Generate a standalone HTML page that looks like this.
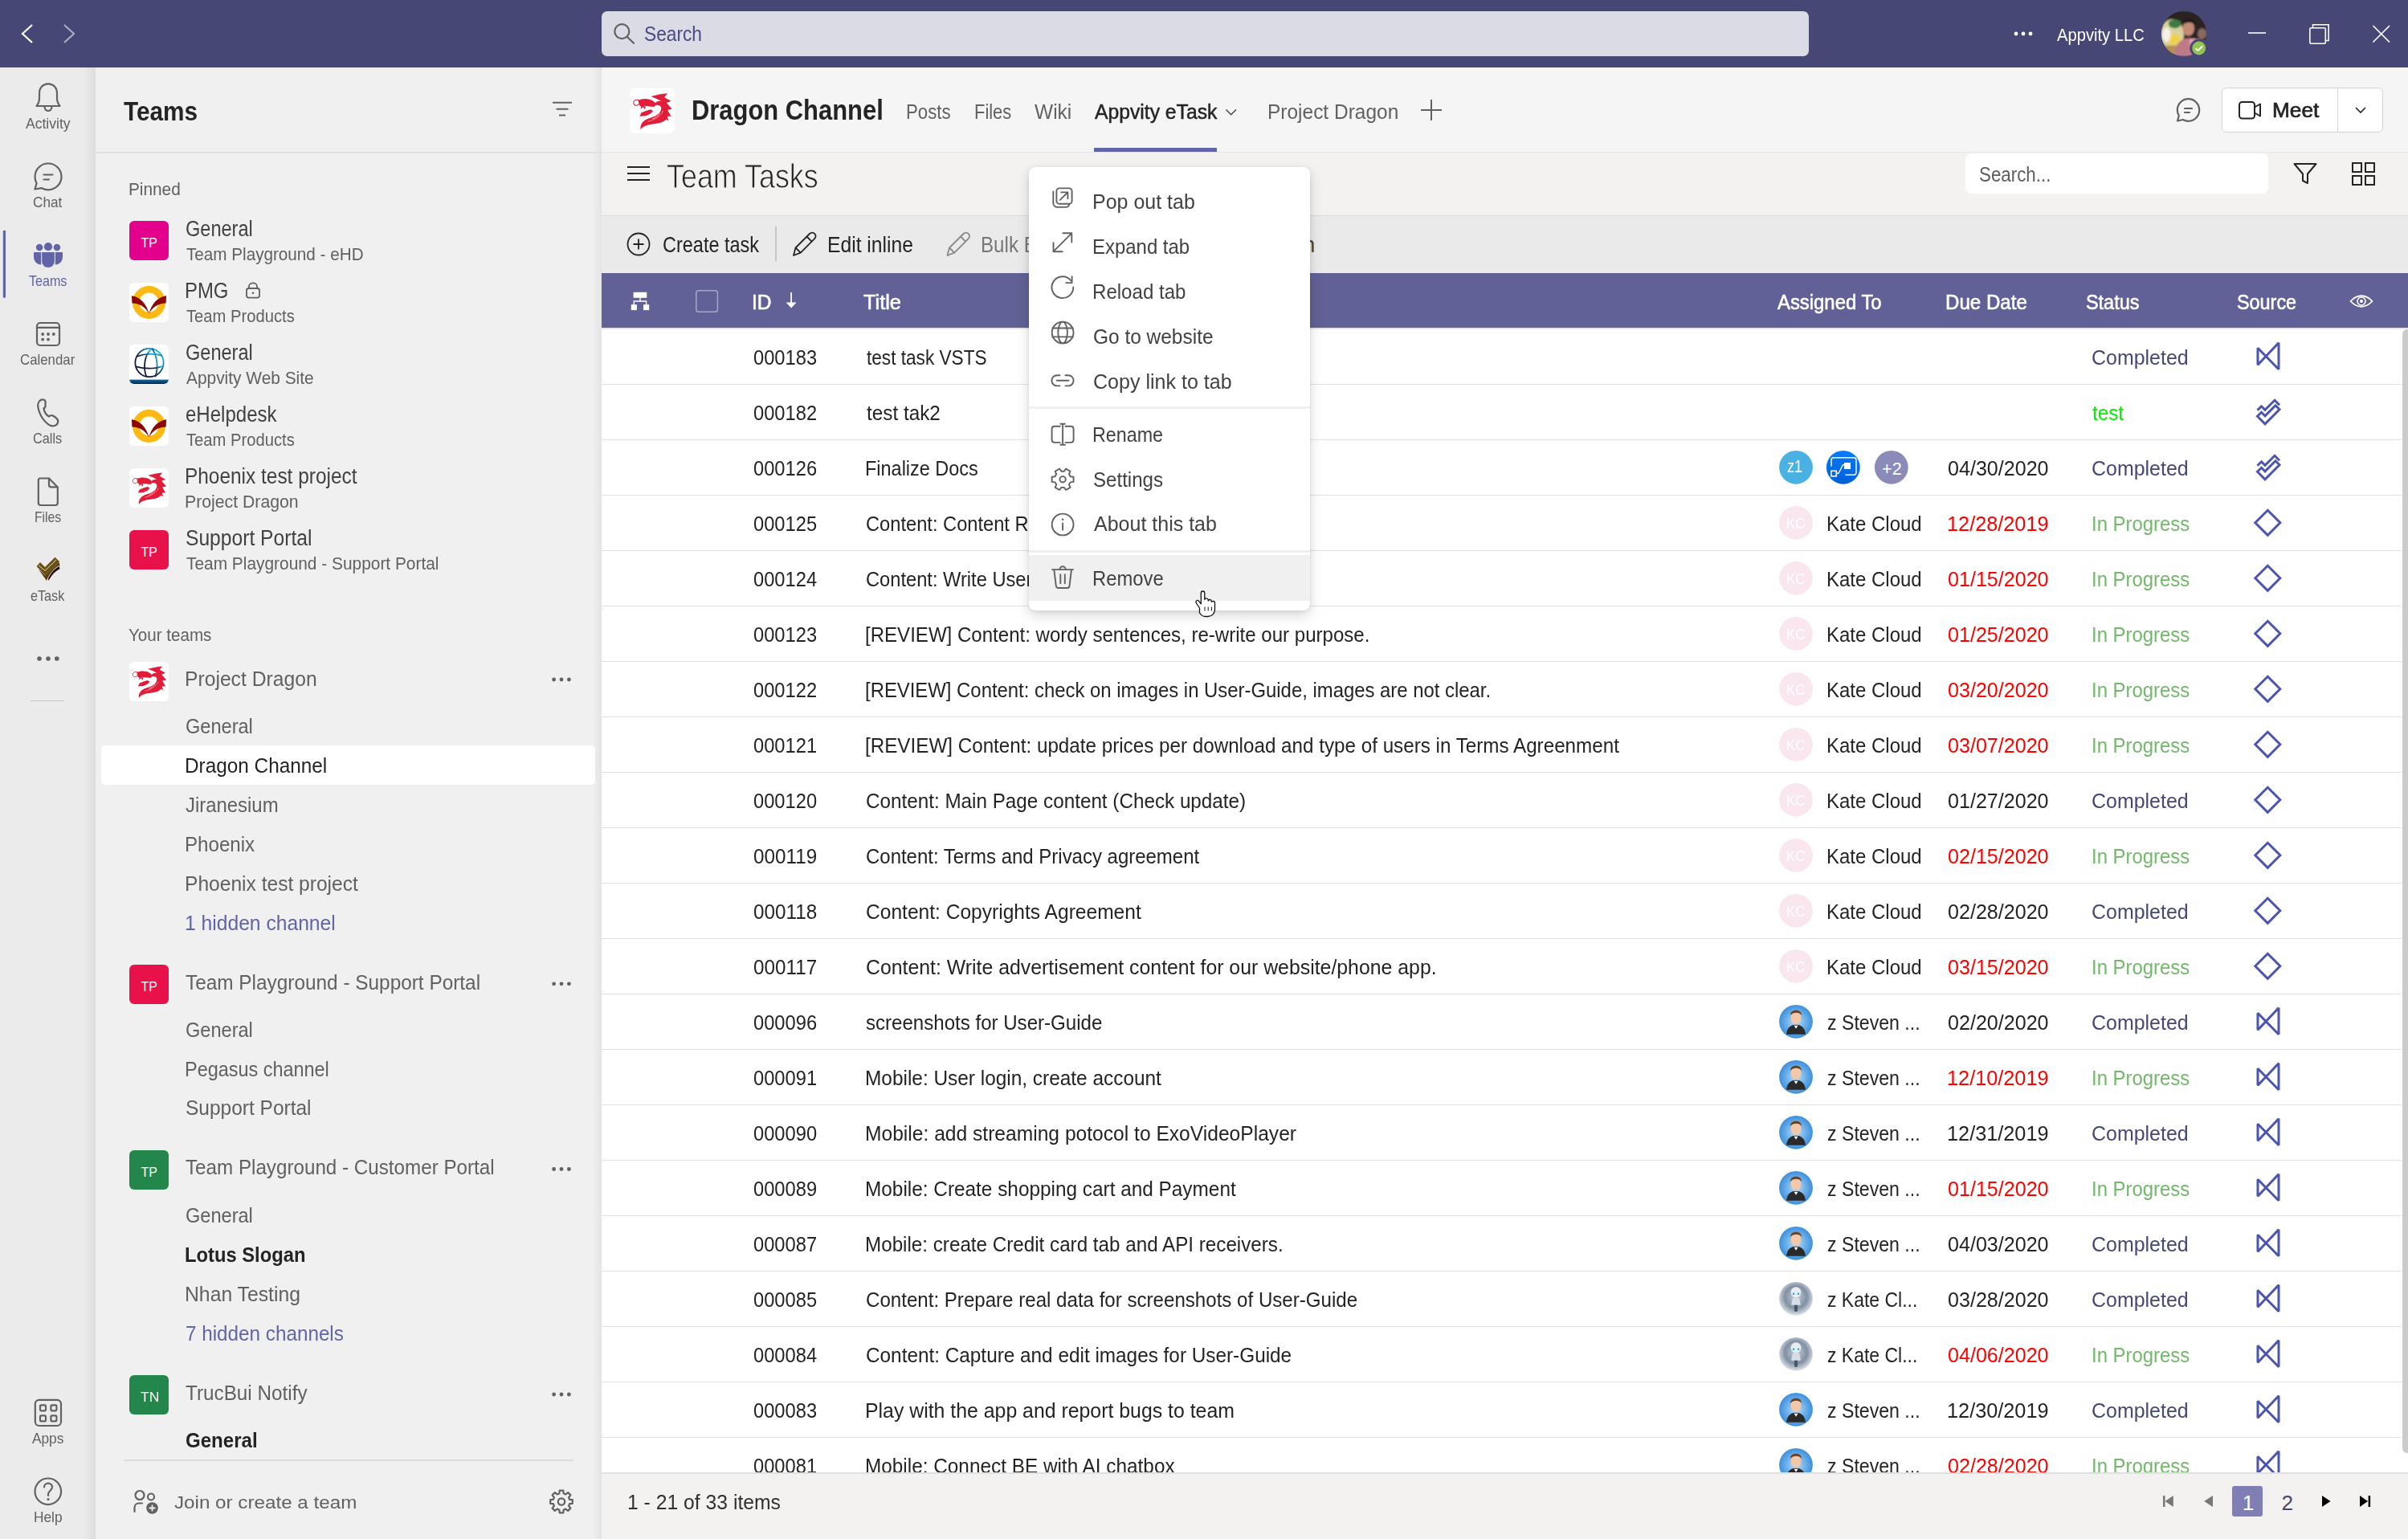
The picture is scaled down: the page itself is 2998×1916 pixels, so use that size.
<!DOCTYPE html><html><head><meta charset="utf-8"><title>Teams - Dragon Channel</title><style>
*{margin:0;padding:0;box-sizing:border-box}
html,body{width:2998px;height:1916px;overflow:hidden;background:#fff;font-family:"Liberation Sans",sans-serif}
.b{position:absolute}
.t{position:absolute;white-space:nowrap;transform-origin:0 0;font-family:"Liberation Sans",sans-serif}
svg{position:absolute;left:0;top:0;overflow:visible}

</style></head><body>
<div class="b" style="left:0px;top:0px;width:2998px;height:84px;background:#464775;"></div>
<div class="b" style="left:0px;top:84px;width:119px;height:1832px;background:#ebebeb;"></div>
<div class="b" style="left:103px;top:84px;width:16px;height:1832px;background:linear-gradient(90deg,rgba(0,0,0,0),rgba(0,0,0,0.06));"></div>
<div class="b" style="left:119px;top:84px;width:630px;height:1832px;background:#f0f0f0;"></div>
<div class="b" style="left:737px;top:84px;width:12px;height:1832px;background:linear-gradient(90deg,rgba(0,0,0,0),rgba(0,0,0,0.05));"></div>
<div class="b" style="left:749px;top:84px;width:2249px;height:105px;background:#f5f5f5;"></div>
<div class="b" style="left:749px;top:188.6px;width:2249px;height:1.6px;background:#e6e6e6;"></div>
<div class="b" style="left:749px;top:190px;width:2249px;height:1726px;background:#f3f2f1;"></div>
<div class="b" style="left:749px;top:268px;width:2249px;height:1.5px;background:#dedcda;"></div>
<div class="b" style="left:749px;top:269px;width:2249px;height:71px;background:#eaeaea;"></div>
<div class="b" style="left:749px;top:340px;width:2249px;height:67.5px;background:#616197;"></div>
<div class="b" style="left:749px;top:407.5px;width:2249px;height:1425.5px;background:#ffffff;"></div>
<div class="b" style="left:749px;top:14px;width:1503px;height:56px;background:#dbdbe5;border-radius:7px;"></div>
<div class="b" style="left:38px;top:871.6px;width:42px;height:1.5px;background:#c8c8c8;"></div>
<div class="b" style="left:119px;top:188.5px;width:630px;height:2px;background:#e0e0e0;"></div>
<div class="b" style="left:161px;top:275px;width:49px;height:49px;background:#e3008c;border-radius:6px;"></div>
<div class="b" style="left:161px;top:583px;width:49px;height:49px;background:#fff;border-radius:6px;"></div>
<div class="b" style="left:161px;top:660px;width:49px;height:49px;background:#e8114a;border-radius:6px;"></div>
<div class="b" style="left:161px;top:824px;width:49px;height:49px;background:#fff;border-radius:6px;"></div>
<div class="b" style="left:126px;top:928px;width:615px;height:49px;background:#ffffff;border-radius:5px;"></div>
<div class="b" style="left:161px;top:1201px;width:49px;height:49px;background:#e8114a;border-radius:6px;"></div>
<div class="b" style="left:161px;top:1432px;width:49px;height:49px;background:#23874b;border-radius:6px;"></div>
<div class="b" style="left:161px;top:1712px;width:49px;height:49px;background:#23874b;border-radius:6px;"></div>
<div class="b" style="left:154px;top:1816.5px;width:560px;height:2px;background:#dcdcdc;"></div>
<div class="b" style="left:784px;top:110px;width:56px;height:56px;background:#fff;border-radius:6px;"></div>
<div class="b" style="left:1362px;top:183.8px;width:153px;height:5.2px;background:#6264a7;"></div>
<div class="b" style="left:2766px;top:109px;width:200.5px;height:55.5px;background:#ffffff;border:1.5px solid #d4d4d4;border-radius:6px;box-sizing:border-box;"></div>
<div class="b" style="left:2909.5px;top:110px;width:1.5px;height:54px;background:#d4d4d4;"></div>
<div class="b" style="left:2447px;top:191px;width:376.5px;height:50px;background:#ffffff;border-radius:8px;"></div>
<div class="b" style="left:965px;top:282px;width:1.5px;height:42.5px;background:#c8c6c4;"></div>
<div class="b" style="left:749px;top:407.5px;width:2249px;height:2px;background:#e6e6e6;"></div>
<div class="b" style="left:749px;top:477.55px;width:2241px;height:1.5px;background:#e1e1e1;"></div>
<div class="b" style="left:749px;top:546.55px;width:2241px;height:1.5px;background:#e1e1e1;"></div>
<div class="b" style="left:749px;top:615.55px;width:2241px;height:1.5px;background:#e1e1e1;"></div>
<div class="b" style="left:749px;top:684.55px;width:2241px;height:1.5px;background:#e1e1e1;"></div>
<div class="b" style="left:749px;top:753.55px;width:2241px;height:1.5px;background:#e1e1e1;"></div>
<div class="b" style="left:749px;top:822.55px;width:2241px;height:1.5px;background:#e1e1e1;"></div>
<div class="b" style="left:749px;top:891.55px;width:2241px;height:1.5px;background:#e1e1e1;"></div>
<div class="b" style="left:749px;top:960.55px;width:2241px;height:1.5px;background:#e1e1e1;"></div>
<div class="b" style="left:749px;top:1029.55px;width:2241px;height:1.5px;background:#e1e1e1;"></div>
<div class="b" style="left:749px;top:1098.55px;width:2241px;height:1.5px;background:#e1e1e1;"></div>
<div class="b" style="left:749px;top:1167.55px;width:2241px;height:1.5px;background:#e1e1e1;"></div>
<div class="b" style="left:749px;top:1236.55px;width:2241px;height:1.5px;background:#e1e1e1;"></div>
<div class="b" style="left:749px;top:1305.55px;width:2241px;height:1.5px;background:#e1e1e1;"></div>
<div class="b" style="left:749px;top:1374.55px;width:2241px;height:1.5px;background:#e1e1e1;"></div>
<div class="b" style="left:749px;top:1443.55px;width:2241px;height:1.5px;background:#e1e1e1;"></div>
<div class="b" style="left:749px;top:1512.55px;width:2241px;height:1.5px;background:#e1e1e1;"></div>
<div class="b" style="left:749px;top:1581.55px;width:2241px;height:1.5px;background:#e1e1e1;"></div>
<div class="b" style="left:749px;top:1650.55px;width:2241px;height:1.5px;background:#e1e1e1;"></div>
<div class="b" style="left:749px;top:1719.55px;width:2241px;height:1.5px;background:#e1e1e1;"></div>
<div class="b" style="left:749px;top:1788.55px;width:2241px;height:1.5px;background:#e1e1e1;"></div>
<div class="b" style="left:2991.2px;top:410px;width:12px;height:1399px;background:#cbcbcb;border-radius:6px;"></div>
<svg width="2998" height="1916" viewBox="0 0 2998 1916"><path d="M40 31 L28 42 L40 53" stroke="#fff" stroke-width="2.2" fill="none"/>
<path d="M80 31 L92 42 L80 53" stroke="#fff" stroke-opacity="0.55" stroke-width="2.2" fill="none"/>
<circle cx="774.3" cy="39.2" r="9" stroke="#616161" stroke-width="2.2" fill="none"/><path d="M781 46 L789 53.7" stroke="#616161" stroke-width="2.2" stroke-linecap="round"/>
<circle cx="2510" cy="42" r="2.4" fill="#fff"/>
<circle cx="2519" cy="42" r="2.4" fill="#fff"/>
<circle cx="2528" cy="42" r="2.4" fill="#fff"/>
<defs><radialGradient id="av" cx="0.6" cy="0.35" r="0.7"><stop offset="0" stop-color="#e8c0a8"/><stop offset="0.35" stop-color="#b07060"/><stop offset="0.7" stop-color="#c07080"/><stop offset="1" stop-color="#6a5a30"/></radialGradient>
<clipPath id="avc"><circle cx="2719" cy="42" r="28.2"/></clipPath></defs>
<filter id="pblur" x="-10%" y="-10%" width="120%" height="120%"><feGaussianBlur stdDeviation="1.6"/></filter><g clip-path="url(#avc)"><g transform="translate(2690.8 13.8) scale(0.564)" filter="url(#pblur)">
<rect width="100" height="100" fill="#2a2420"/>
<ellipse cx="24" cy="52" rx="26" ry="34" fill="#d8d0a0"/>
<ellipse cx="30" cy="28" rx="14" ry="10" fill="#3a7a40"/>
<ellipse cx="28" cy="62" rx="14" ry="12" fill="#f0d048"/>
<ellipse cx="12" cy="52" rx="9" ry="16" fill="#f4f2ea"/>
<rect x="0" y="76" width="40" height="24" fill="#b89050"/>
<ellipse cx="90" cy="50" rx="10" ry="12" fill="#8a6a60"/>
<ellipse cx="60" cy="38" rx="13" ry="17" fill="#c48a78"/>
<path d="M46 32 C46 14 76 12 76 32 C72 24 52 22 46 32 Z" fill="#1a1410"/>
<path d="M28 100 C30 72 44 60 60 60 C76 60 96 64 100 72 V100 Z" fill="#bf7a88"/>
<path d="M62 62 C76 60 94 64 100 72 V100 H70 Z" fill="#e0a6b4"/>
</g></g>
<circle cx="2737.7" cy="60" r="11.4" fill="#464775"/><circle cx="2737.7" cy="60" r="8.4" fill="#92c353"/>
<path d="M2733.5 60.2 L2736.5 63 L2742 57.5" stroke="#fff" stroke-width="1.8" fill="none"/>
<path d="M2799 41 H2821" stroke="#fff" stroke-width="1.6"/>
<rect x="2875.8" y="34.8" width="19.5" height="19.5" stroke="#fff" stroke-width="1.6" fill="none" rx="1.5"/><path d="M2879.5 34.8 V30.8 H2899.2 V50.5 H2895.3" stroke="#fff" stroke-width="1.6" fill="none"/>
<path d="M2954.5 32 L2975 52.5 M2975 32 L2954.5 52.5" stroke="#fff" stroke-width="1.7"/>
<path d="M45.5 132 C47.5 129.5 49 127 49 122 V116 C49 109 53.8 104.3 60 104.3 C66.2 104.3 71 109 71 116 V122 C71 127 72.5 129.5 74.5 132 Z" stroke="#616161" stroke-width="2.2" fill="none" stroke-linejoin="round" stroke-linecap="round"/><path d="M55.5 132.5 C55.5 135.8 57.5 138 60 138 C62.5 138 64.5 135.8 64.5 132.5" stroke="#616161" stroke-width="2.2" fill="none" stroke-linejoin="round" stroke-linecap="round"/>
<path d="M43.5 235.5 L45.6 228 C44 225.5 43.5 223 43.5 220 C43.5 210.8 51 203.5 60 203.5 C69 203.5 76.5 210.8 76.5 220 C76.5 229 69 236.3 60 236.3 C57 236.3 54.5 235.5 52 234.2 Z" stroke="#616161" stroke-width="2.2" fill="none" stroke-linejoin="round" stroke-linecap="round"/><path d="M54.5 217.5 H65.5 M54.5 223.5 H61" stroke="#616161" stroke-width="2.2" fill="none" stroke-linejoin="round" stroke-linecap="round"/>
<rect x="3.8" y="287" width="3.2" height="83.6" fill="#6264a7"/>
<g fill="#6264a7"><circle cx="49.1" cy="308" r="4.3"/><circle cx="60" cy="307.2" r="5.1"/><circle cx="70.9" cy="308" r="4.3"/><path d="M42 314 H51.2 V329.5 C46 329.5 42 325 42 320 Z"/><path d="M68.8 314 H78 V320 C78 325 74 329.5 68.8 329.5 Z"/><path d="M52.2 314 H67.8 V325 C67.8 329.5 64.3 333 60 333 C55.7 333 52.2 329.5 52.2 325 Z"/></g>
<rect x="46" y="402" width="28" height="28" rx="4" stroke="#616161" stroke-width="2.2" fill="none" stroke-linejoin="round" stroke-linecap="round"/><path d="M46 407.8 H74" stroke="#616161" stroke-width="2.2" fill="none" stroke-linejoin="round" stroke-linecap="round"/>
<g fill="#616161"><circle cx="53.2" cy="416" r="1.9"/><circle cx="60" cy="416" r="1.9"/><circle cx="66.8" cy="416" r="1.9"/><circle cx="53.2" cy="422.6" r="1.9"/><circle cx="60" cy="422.6" r="1.9"/></g>
<path d="M54 497.5 C50 497 47 500.5 47.2 505 C47.6 513 53 524 62 529.5 C66 531.5 71 530 72 526 C72.7 523.5 71.5 521.5 69.5 520 L66 517.5 C64 516.5 62 517.5 61 518.5 C57.5 516.5 55 512.5 54.5 508.5 C56 507.5 57 505.5 56.5 503.5 L56.5 500 C56.3 498.5 55.3 497.6 54 497.5 Z" stroke="#616161" stroke-width="2.2" fill="none" stroke-linejoin="round" stroke-linecap="round"/>
<path d="M50 595.5 H61 L71.8 606.5 V626 C71.8 627.7 70.5 629 68.8 629 H50.8 C49.1 629 47.8 627.7 47.8 626 V598 C47.8 596.5 48.6 595.5 50 595.5 Z" stroke="#616161" stroke-width="2.2" fill="none" stroke-linejoin="round" stroke-linecap="round"/><path d="M61 595.8 V603.5 C61 605 62 606.3 63.5 606.3 H71.5" stroke="#616161" stroke-width="2.2" fill="none" stroke-linejoin="round" stroke-linecap="round"/>
<path d="M45.5 705 L50 700 L56 706 L68.5 693.8 L74 699 L56.5 716.5 Z" fill="#6b5010"/><path d="M47.5 708 L56.3 716.5 L73.5 699.5 L74.5 704 C70 705 62 712 58 723 Z" fill="#5a4008"/><path d="M48 703.8 L56 710.5 L70 697" stroke="#fff" stroke-width="1" fill="none" opacity="0.8"/><path d="M60 720 C64 712 69 707 74 705 L74.3 708.5 C69 711 64 716 60.5 723 Z" fill="#2a0a10"/>
<g fill="#616161"><circle cx="49" cy="820" r="2.8"/><circle cx="60" cy="820" r="2.8"/><circle cx="70.8" cy="820" r="2.8"/></g>
<rect x="43.8" y="1742.8" width="32.2" height="32.2" rx="5" stroke="#616161" stroke-width="2.2" fill="none" stroke-linejoin="round" stroke-linecap="round"/>
<rect x="50" y="1749.3" width="7" height="7" rx="1.2" stroke="#616161" stroke-width="2.2" fill="none" stroke-linejoin="round" stroke-linecap="round"/>
<rect x="63.4" y="1749.3" width="7" height="7" rx="1.2" stroke="#616161" stroke-width="2.2" fill="none" stroke-linejoin="round" stroke-linecap="round"/>
<rect x="50" y="1762.4" width="7" height="7" rx="1.2" stroke="#616161" stroke-width="2.2" fill="none" stroke-linejoin="round" stroke-linecap="round"/>
<rect x="63.4" y="1762.4" width="7" height="7" rx="1.2" stroke="#616161" stroke-width="2.2" fill="none" stroke-linejoin="round" stroke-linecap="round"/>
<circle cx="59.8" cy="1856.8" r="16.3" stroke="#616161" stroke-width="2.2" fill="none" stroke-linejoin="round" stroke-linecap="round"/><path d="M55 1851.5 C55 1848.5 57.3 1846.7 60 1846.7 C62.8 1846.7 65 1848.6 65 1851.3 C65 1855.5 60 1856 60 1860.5 V1862" stroke="#616161" stroke-width="2.2" fill="none" stroke-linejoin="round" stroke-linecap="round"/><circle cx="60" cy="1866.5" r="1.6" fill="#616161"/>
<defs>
<symbol id="dragon" viewBox="0 0 100 100">
<g fill="#e11d3a">
<path d="M24.5 92 C22 80 30 70 45 66 C58 62 68 56 70 46 C71 38 64 33 57 37 C60 30 72 30 78 38 C86 48 87 62 80 70 C70 80 50 78 38 82 C30 85 26 88 24.5 92 Z"/>
<path d="M47 18 C60 14 72 12 84 11 L77 20 L92 28 L82 32 L94 46 L84 48 L92 62 L82 62 L87 72 L78 68 C84 56 82 40 72 30 C64 24 56 22 47 18 Z"/>
<path d="M54 36 C58 28 68 26 74 30 C82 38 86 52 84 64 L78 70 C80 56 76 44 66 38 Z"/>
<path d="M19 27 C28 22 42 22 52 28 L60 35 L54 41 L44 40 L34 39 L26 41 L21 37 Z"/>
<path d="M26 39 L24 46 L30 41 L33 47 L36 40 Z"/>
<path d="M22 62 L26 54 L36 50 L46 47 L52 50 L47 56 L36 61 Z"/>
</g>
<path d="M22 27 C12 22 6 30 10 36 C13 40 19 38 20 34" stroke="#e11d3a" stroke-width="1.8" fill="none"/>
<path d="M40 74 C55 70 68 62 74 50 M50 68 C60 64 66 58 67 50" stroke="#fff" stroke-width="1.2" fill="none" opacity="0.8"/>
</symbol>
<symbol id="pmg" viewBox="0 0 100 100">
<rect width="100" height="100" rx="12" fill="#fff"/>
<circle cx="50" cy="50" r="33" stroke="#fdb913" stroke-width="17.5" fill="none"/>
<path d="M6 33 C26 36 44 52 50 79 C42 62 26 52 7 52 Z" fill="#8b0505"/>
<path d="M94 33 C74 36 56 52 50 79 C58 62 74 52 93 52 Z" fill="#8b0505"/>
</symbol>
<symbol id="globe" viewBox="0 0 100 100">
<defs><linearGradient id="gg" x1="0.1" y1="0.9" x2="0.9" y2="0.1"><stop offset="0.35" stop-color="#0f1a3c"/><stop offset="0.95" stop-color="#1ab4ec"/></linearGradient>
<linearGradient id="gb" x1="0" y1="0" x2="0" y2="1"><stop offset="0" stop-color="#0b6aa0"/><stop offset="1" stop-color="#002a5a"/></linearGradient>
<clipPath id="gclip"><rect width="100" height="100" rx="12"/></clipPath></defs>
<rect width="100" height="100" rx="12" fill="#fff"/>
<g stroke="url(#gg)" stroke-width="3.6" fill="none">
<circle cx="51" cy="46" r="36"/>
<path d="M58 10 C38 24 34 60 44 82"/>
<path d="M58 10 C72 30 74 60 66 82"/>
<path d="M20 30 C40 22 66 22 84 28"/>
<path d="M16 56 C40 62 66 62 86 54"/>
</g>
<rect x="0" y="89" width="100" height="11" fill="url(#gb)" clip-path="url(#gclip)"/>
</symbol>
<symbol id="dots3" viewBox="0 0 24 6"><circle cx="2.6" cy="3" r="2.4"/><circle cx="12" cy="3" r="2.4"/><circle cx="21.4" cy="3" r="2.4"/></symbol>
</defs>
<path d="M688 127.8 H712 M692.5 135.7 H707.5 M696 143.6 H704" stroke="#616161" stroke-width="2" />
<use href="#pmg" x="161" y="352" width="49" height="49"/>
<use href="#globe" x="161" y="429" width="49" height="49"/>
<use href="#pmg" x="161" y="506" width="49" height="49"/>
<use href="#dragon" x="161" y="583" width="49" height="49"/>
<rect x="307" y="359" width="16" height="11.6" rx="2.5" stroke="#616161" stroke-width="1.8" fill="none"/><path d="M310 359 V356.5 C310 354 312.5 352.4 315 352.4 C317.5 352.4 320 354 320 356.5 V359" stroke="#616161" stroke-width="1.8" fill="none"/><circle cx="315" cy="364.8" r="1.3" fill="#616161"/>
<use href="#dragon" x="161" y="824" width="49" height="49"/>
<use href="#dots3" x="687" y="843" width="24" height="6" fill="#616161"/>
<use href="#dots3" x="687" y="1221.8" width="24" height="6" fill="#616161"/>
<use href="#dots3" x="687" y="1452.5" width="24" height="6" fill="#616161"/>
<use href="#dots3" x="687" y="1733" width="24" height="6" fill="#616161"/>
<circle cx="174" cy="1861.5" r="5.5" stroke="#616161" stroke-width="2.2" fill="none" stroke-linejoin="round" stroke-linecap="round" stroke-width="2"/><circle cx="188" cy="1863.5" r="4" stroke="#616161" stroke-width="2.2" fill="none" stroke-linejoin="round" stroke-linecap="round" stroke-width="2"/><path d="M167.5 1882 V1877 C167.5 1873.5 170 1871.5 173 1871.5 H177" stroke="#616161" stroke-width="2.2" fill="none" stroke-linejoin="round" stroke-linecap="round" stroke-width="2"/><circle cx="189.5" cy="1877.5" r="7.3" fill="#616161"/><path d="M189.5 1873.5 V1881.5 M185.5 1877.5 H193.5" stroke="#f0f0f0" stroke-width="1.8"/>
<path d="M709.15 1866.81 L712.81 1867.20 L712.81 1871.80 L709.15 1872.19 L708.08 1874.77 L710.39 1877.64 L707.14 1880.89 L704.27 1878.58 L701.69 1879.65 L701.30 1883.31 L696.70 1883.31 L696.31 1879.65 L693.73 1878.58 L690.86 1880.89 L687.61 1877.64 L689.92 1874.77 L688.85 1872.19 L685.19 1871.80 L685.19 1867.20 L688.85 1866.81 L689.92 1864.23 L687.61 1861.36 L690.86 1858.11 L693.73 1860.42 L696.31 1859.35 L696.70 1855.69 L701.30 1855.69 L701.69 1859.35 L704.27 1860.42 L707.14 1858.11 L710.39 1861.36 L708.08 1864.23 Z" stroke="#616161" stroke-width="2.2" fill="none" stroke-linejoin="round" stroke-linecap="round" stroke-width="2"/><circle cx="699" cy="1869.5" r="4.2" stroke="#616161" stroke-width="2.2" fill="none" stroke-linejoin="round" stroke-linecap="round" stroke-width="2"/>
<use href="#dragon" x="784" y="110" width="56" height="56"/>
<path d="M1526.5 136.5 L1532.7 142.7 L1539 136.5" stroke="#424242" stroke-width="1.5" fill="none"/>
<path d="M1782 124 V150 M1769 137 H1795" stroke="#616161" stroke-width="2"/>
<path d="M2711 150.5 L2712.8 144 C2711.5 142 2710.8 139.7 2710.8 137 C2710.8 129.3 2717 123.2 2724.5 123.2 C2732 123.2 2738.2 129.3 2738.2 137 C2738.2 144.6 2732 150.8 2724.5 150.8 C2722 150.8 2719.8 150 2717.7 149 Z" stroke="#616161" stroke-width="2.2" fill="none" stroke-linejoin="round" stroke-linecap="round" stroke-width="2"/><path d="M2720 135 H2729 M2720 140 H2726" stroke="#616161" stroke-width="2.2" fill="none" stroke-linejoin="round" stroke-linecap="round" stroke-width="2"/>
<rect x="2788" y="127" width="19" height="20.5" rx="3.5" stroke="#242424" stroke-width="2" fill="none" stroke-linejoin="round" stroke-linecap="round"/><path d="M2807 133.5 L2814 129.5 V144.5 L2807 140.5" stroke="#242424" stroke-width="2" fill="none" stroke-linejoin="round" stroke-linecap="round"/>
<path d="M2933 134 L2939 140 L2945 134" stroke="#252423" stroke-width="1.6" fill="none"/>
<path d="M781 208 H809 M781 216 H809 M781 224 H809" stroke="#252423" stroke-width="2"/>
<path d="M2856.5 204 H2883.5 L2873 216.5 V228 L2867 225 V216.5 Z" stroke="#252423" stroke-width="2" fill="none" stroke-linejoin="round"/>
<g stroke="#252423" stroke-width="2" fill="none"><rect x="2929" y="203" width="11" height="11"/><rect x="2945" y="203" width="11" height="11"/><rect x="2929" y="219" width="11" height="11"/><rect x="2945" y="219" width="11" height="11"/></g>
<circle cx="795" cy="304" r="13.5" stroke="#252423" stroke-width="1.8" fill="none"/><path d="M795 297.5 V310.5 M788.5 304 H801.5" stroke="#252423" stroke-width="1.8"/>
<path d="M988 318 L990.5 308.5 L1008 291 C1009.8 289.2 1012.6 289.2 1014.2 291 C1016 292.7 1016 295.5 1014.2 297.2 L996.8 314.7 Z M1004.5 294.5 L1010.8 300.8 M990.5 308.5 L996.8 314.7" stroke="#252423" stroke-width="1.8" fill="none" stroke-linejoin="round"/>
<path d="M988 318 L990.5 308.5 L1008 291 C1009.8 289.2 1012.6 289.2 1014.2 291 C1016 292.7 1016 295.5 1014.2 297.2 L996.8 314.7 Z M1004.5 294.5 L1010.8 300.8 M990.5 308.5 L996.8 314.7" transform="translate(191.5 0)" stroke="#8a8886" stroke-width="1.8" fill="none" stroke-linejoin="round"/>
<g fill="#fff"><rect x="788.6" y="363.8" width="16.7" height="7" /><rect x="785.8" y="379.1" width="7.1" height="7"/><rect x="801" y="379.1" width="7.2" height="7"/></g><path d="M797 370.8 V375 M789.3 379.1 V375 H804.6 V379.1" stroke="#fff" stroke-width="1.4" fill="none"/>
<rect x="866.8" y="361.7" width="26.6" height="26.6" rx="3" stroke="rgba(255,255,255,0.45)" stroke-width="1.5" fill="none"/>
<path d="M985.1 364 V378" stroke="#fff" stroke-width="1.8"/><path d="M978.7 376.5 H991.6 L985.1 383.6 Z" fill="#fff"/>
<path d="M2926.5 375 C2935 366 2945 366 2953.5 375 C2945 384 2935 384 2926.5 375 Z" stroke="#fff" stroke-width="1.8" fill="none"/><circle cx="2940" cy="375" r="5" stroke="#fff" stroke-width="1.6" fill="none"/><circle cx="2940" cy="375" r="2" fill="#fff"/>
<defs>
<radialGradient id="stv" cx="0.5" cy="0.5" r="0.5"><stop offset="0" stop-color="#bfe0f8"/><stop offset="0.6" stop-color="#6aaee8"/><stop offset="1" stop-color="#3d8fdc"/></radialGradient>
<radialGradient id="rob" cx="0.5" cy="0.45" r="0.55"><stop offset="0" stop-color="#c8d0d8"/><stop offset="0.6" stop-color="#8090a4"/><stop offset="1" stop-color="#e0e4ea"/></radialGradient>
<linearGradient id="flow" x1="0" y1="0" x2="0" y2="1"><stop offset="0" stop-color="#0a7af8"/><stop offset="1" stop-color="#0060d8"/></linearGradient>
</defs>
<path d="M2811 433.3 L2837 459.8 V426.8 L2811 454.3 Z" stroke="#4b55b0" stroke-width="3" fill="none" stroke-linejoin="miter" stroke-miterlimit="1.6"/>
<path d="M2810.5 510.79999999999995 L2815.5 505.79999999999995 L2820 510.29999999999995 L2832 498.29999999999995 L2838 504.29999999999995" stroke="#4b55b0" stroke-width="3" fill="none"/><path d="M2810.5 518.3 L2820 527.8 L2838 509.79999999999995 L2833 504.79999999999995 L2820 517.8 L2815.5 513.3 Z" stroke="#4b55b0" stroke-width="3" fill="none"/>
<circle cx="2236" cy="581.8" r="20.9" fill="#4ab2e3"/>
<circle cx="2294.8" cy="581.8" r="20.9" fill="url(#flow)"/><path d="M2280 580.8 V572.8 C2280 570.8 2281 569.8 2283 569.8 H2308 C2310 569.8 2311 570.8 2311 572.8 V588.3 C2311 590.3 2310 591.3 2308 591.3 H2297.5" stroke="#fff" stroke-width="1.4" fill="none"/><rect x="2279.8" y="586.3" width="6.5" height="6.5" stroke="#fff" stroke-width="1.6" fill="none"/><path d="M2286.3 589.3 L2289 589.3 L2294.5 578.8 H2296" stroke="#fff" stroke-width="1.4" fill="none"/><rect x="2296" y="576.0" width="8" height="8" fill="#fff"/>
<circle cx="2354.8" cy="581.8" r="20.9" fill="#8b8bba"/>
<path d="M2810.5 579.8 L2815.5 574.8 L2820 579.3 L2832 567.3 L2838 573.3" stroke="#4b55b0" stroke-width="3" fill="none"/><path d="M2810.5 587.3 L2820 596.8 L2838 578.8 L2833 573.8 L2820 586.8 L2815.5 582.3 Z" stroke="#4b55b0" stroke-width="3" fill="none"/>
<circle cx="2236" cy="650.8" r="20.9" fill="#f9e6ef"/>
<path d="M2823.3 635.3 L2838.8 650.8 L2823.3 666.3 L2807.8 650.8 Z" stroke="#4b55b0" stroke-width="3" fill="none"/>
<circle cx="2236" cy="719.8" r="20.9" fill="#f9e6ef"/>
<path d="M2823.3 704.3 L2838.8 719.8 L2823.3 735.3 L2807.8 719.8 Z" stroke="#4b55b0" stroke-width="3" fill="none"/>
<circle cx="2236" cy="788.8" r="20.9" fill="#f9e6ef"/>
<path d="M2823.3 773.3 L2838.8 788.8 L2823.3 804.3 L2807.8 788.8 Z" stroke="#4b55b0" stroke-width="3" fill="none"/>
<circle cx="2236" cy="857.8" r="20.9" fill="#f9e6ef"/>
<path d="M2823.3 842.3 L2838.8 857.8 L2823.3 873.3 L2807.8 857.8 Z" stroke="#4b55b0" stroke-width="3" fill="none"/>
<circle cx="2236" cy="926.8" r="20.9" fill="#f9e6ef"/>
<path d="M2823.3 911.3 L2838.8 926.8 L2823.3 942.3 L2807.8 926.8 Z" stroke="#4b55b0" stroke-width="3" fill="none"/>
<circle cx="2236" cy="995.8" r="20.9" fill="#f9e6ef"/>
<path d="M2823.3 980.3 L2838.8 995.8 L2823.3 1011.3 L2807.8 995.8 Z" stroke="#4b55b0" stroke-width="3" fill="none"/>
<circle cx="2236" cy="1064.8" r="20.9" fill="#f9e6ef"/>
<path d="M2823.3 1049.3 L2838.8 1064.8 L2823.3 1080.3 L2807.8 1064.8 Z" stroke="#4b55b0" stroke-width="3" fill="none"/>
<circle cx="2236" cy="1133.8" r="20.9" fill="#f9e6ef"/>
<path d="M2823.3 1118.3 L2838.8 1133.8 L2823.3 1149.3 L2807.8 1133.8 Z" stroke="#4b55b0" stroke-width="3" fill="none"/>
<circle cx="2236" cy="1202.8" r="20.9" fill="#f9e6ef"/>
<path d="M2823.3 1187.3 L2838.8 1202.8 L2823.3 1218.3 L2807.8 1202.8 Z" stroke="#4b55b0" stroke-width="3" fill="none"/>
<circle cx="2236" cy="1271.8" r="20.9" fill="url(#stv)"/><ellipse cx="2236" cy="1266.8" rx="6.5" ry="8" fill="#f2c8a8"/><path d="M2229 1263.8 C2229 1255.8 2243 1255.8 2243 1263.8 C2240 1259.8 2233 1259.8 2229 1263.8 Z" fill="#6a4020"/><path d="M2224 1287.8 C2225 1278.8 2230 1275.8 2236 1275.8 C2242 1275.8 2247 1278.8 2248 1287.8 Z" fill="#2a2a2a"/><path d="M2233.5 1276.8 L2236 1280.8 L2238.5 1276.8 Z" fill="#fff"/>
<path d="M2811 1261.3 L2837 1287.8 V1254.8 L2811 1282.3 Z" stroke="#4b55b0" stroke-width="3" fill="none" stroke-linejoin="miter" stroke-miterlimit="1.6"/>
<circle cx="2236" cy="1340.8" r="20.9" fill="url(#stv)"/><ellipse cx="2236" cy="1335.8" rx="6.5" ry="8" fill="#f2c8a8"/><path d="M2229 1332.8 C2229 1324.8 2243 1324.8 2243 1332.8 C2240 1328.8 2233 1328.8 2229 1332.8 Z" fill="#6a4020"/><path d="M2224 1356.8 C2225 1347.8 2230 1344.8 2236 1344.8 C2242 1344.8 2247 1347.8 2248 1356.8 Z" fill="#2a2a2a"/><path d="M2233.5 1345.8 L2236 1349.8 L2238.5 1345.8 Z" fill="#fff"/>
<path d="M2811 1330.3 L2837 1356.8 V1323.8 L2811 1351.3 Z" stroke="#4b55b0" stroke-width="3" fill="none" stroke-linejoin="miter" stroke-miterlimit="1.6"/>
<circle cx="2236" cy="1409.8" r="20.9" fill="url(#stv)"/><ellipse cx="2236" cy="1404.8" rx="6.5" ry="8" fill="#f2c8a8"/><path d="M2229 1401.8 C2229 1393.8 2243 1393.8 2243 1401.8 C2240 1397.8 2233 1397.8 2229 1401.8 Z" fill="#6a4020"/><path d="M2224 1425.8 C2225 1416.8 2230 1413.8 2236 1413.8 C2242 1413.8 2247 1416.8 2248 1425.8 Z" fill="#2a2a2a"/><path d="M2233.5 1414.8 L2236 1418.8 L2238.5 1414.8 Z" fill="#fff"/>
<path d="M2811 1399.3 L2837 1425.8 V1392.8 L2811 1420.3 Z" stroke="#4b55b0" stroke-width="3" fill="none" stroke-linejoin="miter" stroke-miterlimit="1.6"/>
<circle cx="2236" cy="1478.8" r="20.9" fill="url(#stv)"/><ellipse cx="2236" cy="1473.8" rx="6.5" ry="8" fill="#f2c8a8"/><path d="M2229 1470.8 C2229 1462.8 2243 1462.8 2243 1470.8 C2240 1466.8 2233 1466.8 2229 1470.8 Z" fill="#6a4020"/><path d="M2224 1494.8 C2225 1485.8 2230 1482.8 2236 1482.8 C2242 1482.8 2247 1485.8 2248 1494.8 Z" fill="#2a2a2a"/><path d="M2233.5 1483.8 L2236 1487.8 L2238.5 1483.8 Z" fill="#fff"/>
<path d="M2811 1468.3 L2837 1494.8 V1461.8 L2811 1489.3 Z" stroke="#4b55b0" stroke-width="3" fill="none" stroke-linejoin="miter" stroke-miterlimit="1.6"/>
<circle cx="2236" cy="1547.8" r="20.9" fill="url(#stv)"/><ellipse cx="2236" cy="1542.8" rx="6.5" ry="8" fill="#f2c8a8"/><path d="M2229 1539.8 C2229 1531.8 2243 1531.8 2243 1539.8 C2240 1535.8 2233 1535.8 2229 1539.8 Z" fill="#6a4020"/><path d="M2224 1563.8 C2225 1554.8 2230 1551.8 2236 1551.8 C2242 1551.8 2247 1554.8 2248 1563.8 Z" fill="#2a2a2a"/><path d="M2233.5 1552.8 L2236 1556.8 L2238.5 1552.8 Z" fill="#fff"/>
<path d="M2811 1537.3 L2837 1563.8 V1530.8 L2811 1558.3 Z" stroke="#4b55b0" stroke-width="3" fill="none" stroke-linejoin="miter" stroke-miterlimit="1.6"/>
<circle cx="2236" cy="1616.8" r="20.9" fill="url(#rob)"/><circle cx="2236" cy="1608.8" r="6.5" fill="#e8ecf0"/><circle cx="2233" cy="1610.8" r="1.3" fill="#18b0d0"/><circle cx="2239" cy="1610.8" r="1.3" fill="#18b0d0"/><path d="M2232 1615.8 H2240 L2242 1624.8 H2230 Z" fill="#d8dee6"/><path d="M2235 1624.8 V1632.8 M2237 1624.8 V1632.8" stroke="#304050" stroke-width="1.5"/>
<path d="M2811 1606.3 L2837 1632.8 V1599.8 L2811 1627.3 Z" stroke="#4b55b0" stroke-width="3" fill="none" stroke-linejoin="miter" stroke-miterlimit="1.6"/>
<circle cx="2236" cy="1685.8" r="20.9" fill="url(#rob)"/><circle cx="2236" cy="1677.8" r="6.5" fill="#e8ecf0"/><circle cx="2233" cy="1679.8" r="1.3" fill="#18b0d0"/><circle cx="2239" cy="1679.8" r="1.3" fill="#18b0d0"/><path d="M2232 1684.8 H2240 L2242 1693.8 H2230 Z" fill="#d8dee6"/><path d="M2235 1693.8 V1701.8 M2237 1693.8 V1701.8" stroke="#304050" stroke-width="1.5"/>
<path d="M2811 1675.3 L2837 1701.8 V1668.8 L2811 1696.3 Z" stroke="#4b55b0" stroke-width="3" fill="none" stroke-linejoin="miter" stroke-miterlimit="1.6"/>
<circle cx="2236" cy="1754.8" r="20.9" fill="url(#stv)"/><ellipse cx="2236" cy="1749.8" rx="6.5" ry="8" fill="#f2c8a8"/><path d="M2229 1746.8 C2229 1738.8 2243 1738.8 2243 1746.8 C2240 1742.8 2233 1742.8 2229 1746.8 Z" fill="#6a4020"/><path d="M2224 1770.8 C2225 1761.8 2230 1758.8 2236 1758.8 C2242 1758.8 2247 1761.8 2248 1770.8 Z" fill="#2a2a2a"/><path d="M2233.5 1759.8 L2236 1763.8 L2238.5 1759.8 Z" fill="#fff"/>
<path d="M2811 1744.3 L2837 1770.8 V1737.8 L2811 1765.3 Z" stroke="#4b55b0" stroke-width="3" fill="none" stroke-linejoin="miter" stroke-miterlimit="1.6"/>
<circle cx="2236" cy="1823.8" r="20.9" fill="url(#stv)"/><ellipse cx="2236" cy="1818.8" rx="6.5" ry="8" fill="#f2c8a8"/><path d="M2229 1815.8 C2229 1807.8 2243 1807.8 2243 1815.8 C2240 1811.8 2233 1811.8 2229 1815.8 Z" fill="#6a4020"/><path d="M2224 1839.8 C2225 1830.8 2230 1827.8 2236 1827.8 C2242 1827.8 2247 1830.8 2248 1839.8 Z" fill="#2a2a2a"/><path d="M2233.5 1828.8 L2236 1832.8 L2238.5 1828.8 Z" fill="#fff"/>
<path d="M2811 1813.3 L2837 1839.8 V1806.8 L2811 1834.3 Z" stroke="#4b55b0" stroke-width="3" fill="none" stroke-linejoin="miter" stroke-miterlimit="1.6"/></svg>
<div class="t" style="left:801.8px;top:29.4px;font-size:26.16px;line-height:26.16px;color:#494b83;transform:scaleX(0.8688);">Search</div>
<div class="t" style="left:2561.0px;top:32.7px;font-size:22.24px;line-height:22.24px;color:#ffffff;transform:scaleX(0.9076);">Appvity LLC</div>
<div class="t" style="left:31.6px;top:145.2px;font-size:18.17px;line-height:18.17px;color:#616161;transform:scaleX(0.9655);">Activity</div>
<div class="t" style="left:41.4px;top:243.0px;font-size:18.17px;line-height:18.17px;color:#616161;transform:scaleX(0.9459);">Chat</div>
<div class="t" style="left:36.3px;top:341.0px;font-size:18.17px;line-height:18.17px;color:#6264a7;transform:scaleX(0.8868);">Teams</div>
<div class="t" style="left:25.1px;top:438.5px;font-size:18.17px;line-height:18.17px;color:#616161;transform:scaleX(0.9260);">Calendar</div>
<div class="t" style="left:41.4px;top:536.8px;font-size:18.17px;line-height:18.17px;color:#616161;transform:scaleX(0.8974);">Calls</div>
<div class="t" style="left:43.0px;top:634.6px;font-size:18.17px;line-height:18.17px;color:#616161;transform:scaleX(0.8649);">Files</div>
<div class="t" style="left:38.4px;top:732.5px;font-size:18.17px;line-height:18.17px;color:#616161;transform:scaleX(0.8913);">eTask</div>
<div class="t" style="left:40.1px;top:1781.9px;font-size:18.17px;line-height:18.17px;color:#616161;transform:scaleX(0.9512);">Apps</div>
<div class="t" style="left:41.7px;top:1880.0px;font-size:18.17px;line-height:18.17px;color:#616161;transform:scaleX(0.9528);">Help</div>
<div class="t" style="left:154.4px;top:121.7px;font-size:32.99px;line-height:32.99px;color:#242424;transform:scaleX(0.9010);font-weight:700;">Teams</div>
<div class="t" style="left:159.7px;top:225.1px;font-size:21.8px;line-height:21.8px;color:#616161;transform:scaleX(0.9538);">Pinned</div>
<div class="t" style="left:175.5px;top:294.6px;font-size:15.99px;line-height:15.99px;color:#ffffff;">TP</div>
<div class="t" style="left:230.7px;top:271.0px;font-size:27.18px;line-height:27.18px;color:#424242;transform:scaleX(0.8660);">General</div>
<div class="t" style="left:231.6px;top:306.1px;font-size:22.09px;line-height:22.09px;color:#616161;transform:scaleX(0.9362);">Team Playground - eHD</div>
<div class="t" style="left:229.8px;top:348.0px;font-size:27.18px;line-height:27.18px;color:#424242;transform:scaleX(0.8793);">PMG</div>
<div class="t" style="left:231.6px;top:383.1px;font-size:22.09px;line-height:22.09px;color:#616161;transform:scaleX(0.9150);">Team Products</div>
<div class="t" style="left:230.7px;top:425.0px;font-size:27.18px;line-height:27.18px;color:#424242;transform:scaleX(0.8660);">General</div>
<div class="t" style="left:231.6px;top:460.1px;font-size:22.09px;line-height:22.09px;color:#616161;transform:scaleX(0.9461);">Appvity Web Site</div>
<div class="t" style="left:230.7px;top:502.0px;font-size:27.18px;line-height:27.18px;color:#424242;transform:scaleX(0.8850);">eHelpdesk</div>
<div class="t" style="left:231.6px;top:537.1px;font-size:22.09px;line-height:22.09px;color:#616161;transform:scaleX(0.9150);">Team Products</div>
<div class="t" style="left:229.8px;top:579.0px;font-size:27.18px;line-height:27.18px;color:#424242;transform:scaleX(0.8987);">Phoenix test project</div>
<div class="t" style="left:229.7px;top:614.1px;font-size:22.09px;line-height:22.09px;color:#616161;transform:scaleX(0.9618);">Project Dragon</div>
<div class="t" style="left:175.5px;top:679.6px;font-size:15.99px;line-height:15.99px;color:#ffffff;">TP</div>
<div class="t" style="left:230.7px;top:656.0px;font-size:27.18px;line-height:27.18px;color:#424242;transform:scaleX(0.9064);">Support Portal</div>
<div class="t" style="left:231.6px;top:691.1px;font-size:22.09px;line-height:22.09px;color:#616161;transform:scaleX(0.9456);">Team Playground - Support Portal</div>
<div class="t" style="left:160.1px;top:780.4px;font-size:21.8px;line-height:21.8px;color:#616161;transform:scaleX(0.9444);">Your teams</div>
<div class="t" style="left:229.5px;top:832.2px;font-size:26.45px;line-height:26.45px;color:#616161;transform:scaleX(0.9335);">Project Dragon</div>
<div class="t" style="left:230.5px;top:891.2px;font-size:26.45px;line-height:26.45px;color:#616161;transform:scaleX(0.8913);">General</div>
<div class="t" style="left:229.6px;top:940.2px;font-size:26.45px;line-height:26.45px;color:#242424;transform:scaleX(0.9206);">Dragon Channel</div>
<div class="t" style="left:230.5px;top:989.2px;font-size:26.45px;line-height:26.45px;color:#616161;transform:scaleX(0.9040);">Jiranesium</div>
<div class="t" style="left:229.6px;top:1038.2px;font-size:26.45px;line-height:26.45px;color:#616161;transform:scaleX(0.9118);">Phoenix</div>
<div class="t" style="left:229.5px;top:1087.0px;font-size:26.45px;line-height:26.45px;color:#616161;transform:scaleX(0.9296);">Phoenix test project</div>
<div class="t" style="left:229.5px;top:1135.8px;font-size:26.45px;line-height:26.45px;color:#6264a7;transform:scaleX(0.9323);">1 hidden channel</div>
<div class="t" style="left:175.5px;top:1220.6px;font-size:15.99px;line-height:15.99px;color:#ffffff;">TP</div>
<div class="t" style="left:230.5px;top:1209.5px;font-size:26.45px;line-height:26.45px;color:#616161;transform:scaleX(0.9217);">Team Playground - Support Portal</div>
<div class="t" style="left:230.5px;top:1269.0px;font-size:26.45px;line-height:26.45px;color:#616161;transform:scaleX(0.8913);">General</div>
<div class="t" style="left:229.6px;top:1317.7px;font-size:26.45px;line-height:26.45px;color:#616161;transform:scaleX(0.8864);">Pegasus channel</div>
<div class="t" style="left:230.5px;top:1366.4px;font-size:26.45px;line-height:26.45px;color:#616161;transform:scaleX(0.9263);">Support Portal</div>
<div class="t" style="left:175.5px;top:1451.6px;font-size:15.99px;line-height:15.99px;color:#ffffff;">TP</div>
<div class="t" style="left:230.5px;top:1440.2px;font-size:26.45px;line-height:26.45px;color:#616161;transform:scaleX(0.9153);">Team Playground - Customer Portal</div>
<div class="t" style="left:230.5px;top:1499.7px;font-size:26.45px;line-height:26.45px;color:#616161;transform:scaleX(0.8913);">General</div>
<div class="t" style="left:229.6px;top:1549.2px;font-size:26.45px;line-height:26.45px;color:#242424;transform:scaleX(0.8988);font-weight:700;">Lotus Slogan</div>
<div class="t" style="left:229.5px;top:1598.2px;font-size:26.45px;line-height:26.45px;color:#616161;transform:scaleX(0.9360);">Nhan Testing</div>
<div class="t" style="left:230.5px;top:1647.1px;font-size:26.45px;line-height:26.45px;color:#6264a7;transform:scaleX(0.9174);">7 hidden channels</div>
<div class="t" style="left:174.5px;top:1731.6px;font-size:15.99px;line-height:15.99px;color:#ffffff;transform:scaleX(1.1000);">TN</div>
<div class="t" style="left:230.5px;top:1721.2px;font-size:26.45px;line-height:26.45px;color:#616161;transform:scaleX(0.9183);">TrucBui Notify</div>
<div class="t" style="left:230.5px;top:1779.6px;font-size:26.45px;line-height:26.45px;color:#242424;transform:scaleX(0.9104);font-weight:700;">General</div>
<div class="t" style="left:217.2px;top:1859.5px;font-size:22.53px;line-height:22.53px;color:#616161;transform:scaleX(1.0748);">Join or create a team</div>
<div class="t" style="left:861.2px;top:119.6px;font-size:34.16px;line-height:34.16px;color:#242424;transform:scaleX(0.9050);font-weight:700;">Dragon Channel</div>
<div class="t" style="left:1128.2px;top:126.2px;font-size:26.16px;line-height:26.16px;color:#616161;transform:scaleX(0.8492);">Posts</div>
<div class="t" style="left:1212.5px;top:126.2px;font-size:26.16px;line-height:26.16px;color:#616161;transform:scaleX(0.8377);">Files</div>
<div class="t" style="left:1288.0px;top:126.2px;font-size:26.16px;line-height:26.16px;color:#616161;transform:scaleX(0.9375);">Wiki</div>
<div class="t" style="left:1362.9px;top:126.2px;font-size:26.16px;line-height:26.16px;color:#242424;transform:scaleX(0.9441);-webkit-text-stroke:0.5px #242424;">Appvity eTask</div>
<div class="t" style="left:1578.1px;top:126.2px;font-size:26.16px;line-height:26.16px;color:#616161;transform:scaleX(0.9357);">Project Dragon</div>
<div class="t" style="left:2828.9px;top:125.0px;font-size:25.29px;line-height:25.29px;color:#252423;transform:scaleX(1.0370);-webkit-text-stroke:0.7px #252423;">Meet</div>
<div class="t" style="left:830.2px;top:197.5px;font-size:42.59px;line-height:42.59px;color:#252423;transform:scaleX(0.8423);-webkit-text-stroke:0.9px #f3f2f1;">Team Tasks</div>
<div class="t" style="left:2464.1px;top:204.7px;font-size:25.29px;line-height:25.29px;color:#605e5c;transform:scaleX(0.8837);">Search...</div>
<div class="t" style="left:825.1px;top:291.3px;font-size:27.47px;line-height:27.47px;color:#252423;transform:scaleX(0.8547);">Create task</div>
<div class="t" style="left:1030.2px;top:291.3px;font-size:27.47px;line-height:27.47px;color:#252423;transform:scaleX(0.8983);">Edit inline</div>
<div class="t" style="left:1221.2px;top:291.3px;font-size:27.47px;line-height:27.47px;color:#797775;transform:scaleX(0.8800);">Bulk Edit</div>
<div class="t" style="left:1622.0px;top:291.3px;font-size:27.47px;line-height:27.47px;color:#484644;">n</div>
<div class="t" style="left:935.7px;top:363.4px;font-size:26.31px;line-height:26.31px;color:#ffffff;transform:scaleX(0.9348);-webkit-text-stroke:0.6px #fff;">ID</div>
<div class="t" style="left:1075.0px;top:363.4px;font-size:26.31px;line-height:26.31px;color:#ffffff;transform:scaleX(0.9638);-webkit-text-stroke:0.6px #fff;">Title</div>
<div class="t" style="left:2213.0px;top:363.4px;font-size:26.31px;line-height:26.31px;color:#ffffff;transform:scaleX(0.9077);-webkit-text-stroke:0.6px #fff;">Assigned To</div>
<div class="t" style="left:2422.2px;top:363.4px;font-size:26.31px;line-height:26.31px;color:#ffffff;transform:scaleX(0.9167);-webkit-text-stroke:0.6px #fff;">Due Date</div>
<div class="t" style="left:2597.1px;top:363.4px;font-size:26.31px;line-height:26.31px;color:#ffffff;transform:scaleX(0.8904);-webkit-text-stroke:0.6px #fff;">Status</div>
<div class="t" style="left:2784.7px;top:363.4px;font-size:26.31px;line-height:26.31px;color:#ffffff;transform:scaleX(0.8889);-webkit-text-stroke:0.6px #fff;">Source</div>
<div class="t" style="left:937.5px;top:432.0px;font-size:26.6px;line-height:26.6px;color:#252423;transform:scaleX(0.8908);">000183</div>
<div class="t" style="left:1078.5px;top:432.0px;font-size:26.6px;line-height:26.6px;color:#252423;transform:scaleX(0.8503);">test task VSTS</div>
<div class="t" style="left:2604.3px;top:432.6px;font-size:25.87px;line-height:25.87px;color:#464775;transform:scaleX(0.9650);">Completed</div>
<div class="t" style="left:937.5px;top:501.0px;font-size:26.6px;line-height:26.6px;color:#252423;transform:scaleX(0.8908);">000182</div>
<div class="t" style="left:1078.5px;top:501.0px;font-size:26.6px;line-height:26.6px;color:#252423;transform:scaleX(0.9131);">test tak2</div>
<div class="t" style="left:2605.3px;top:501.6px;font-size:25.87px;line-height:25.87px;color:#00f000;transform:scaleX(0.9381);">test</div>
<div class="t" style="left:937.5px;top:570.0px;font-size:26.6px;line-height:26.6px;color:#252423;transform:scaleX(0.8908);">000126</div>
<div class="t" style="left:1076.7px;top:570.0px;font-size:26.6px;line-height:26.6px;color:#252423;transform:scaleX(0.8822);">Finalize Docs</div>
<div class="t" style="left:2224.9px;top:570.0px;font-size:22.24px;line-height:22.24px;color:#ffffff;transform:scaleX(0.8182);">z1</div>
<div class="t" style="left:2343.0px;top:573.4px;font-size:21.66px;line-height:21.66px;color:#ffffff;">+2</div>
<div class="t" style="left:2424.5px;top:570.0px;font-size:26.6px;line-height:26.6px;color:#252423;transform:scaleX(0.9435);">04/30/2020</div>
<div class="t" style="left:2604.3px;top:570.6px;font-size:25.87px;line-height:25.87px;color:#464775;transform:scaleX(0.9650);">Completed</div>
<div class="t" style="left:937.5px;top:639.0px;font-size:26.6px;line-height:26.6px;color:#252423;transform:scaleX(0.8908);">000125</div>
<div class="t" style="left:1077.6px;top:639.0px;font-size:26.6px;line-height:26.6px;color:#252423;transform:scaleX(0.8900);">Content: Content Review</div>
<div class="t" style="left:2224.1px;top:641.7px;font-size:19.19px;line-height:19.19px;color:#ffffff;transform:scaleX(0.8800);">KC</div>
<div class="t" style="left:2273.8px;top:639.0px;font-size:26.6px;line-height:26.6px;color:#252423;transform:scaleX(0.9016);">Kate Cloud</div>
<div class="t" style="left:2423.5px;top:639.0px;font-size:26.6px;line-height:26.6px;color:#ff0000;transform:scaleX(0.9508);">12/28/2019</div>
<div class="t" style="left:2603.5px;top:639.6px;font-size:25.87px;line-height:25.87px;color:#73b86b;transform:scaleX(0.9248);">In Progress</div>
<div class="t" style="left:937.5px;top:708.0px;font-size:26.6px;line-height:26.6px;color:#252423;transform:scaleX(0.8908);">000124</div>
<div class="t" style="left:1077.6px;top:708.0px;font-size:26.6px;line-height:26.6px;color:#252423;transform:scaleX(0.8900);">Content: Write User-Guide</div>
<div class="t" style="left:2224.1px;top:710.7px;font-size:19.19px;line-height:19.19px;color:#ffffff;transform:scaleX(0.8800);">KC</div>
<div class="t" style="left:2273.8px;top:708.0px;font-size:26.6px;line-height:26.6px;color:#252423;transform:scaleX(0.9016);">Kate Cloud</div>
<div class="t" style="left:2424.5px;top:708.0px;font-size:26.6px;line-height:26.6px;color:#ff0000;transform:scaleX(0.9435);">01/15/2020</div>
<div class="t" style="left:2603.5px;top:708.6px;font-size:25.87px;line-height:25.87px;color:#73b86b;transform:scaleX(0.9248);">In Progress</div>
<div class="t" style="left:937.5px;top:777.0px;font-size:26.6px;line-height:26.6px;color:#252423;transform:scaleX(0.8908);">000123</div>
<div class="t" style="left:1076.7px;top:777.0px;font-size:26.6px;line-height:26.6px;color:#252423;transform:scaleX(0.9046);">[REVIEW] Content: wordy sentences, re-write our purpose.</div>
<div class="t" style="left:2224.1px;top:779.7px;font-size:19.19px;line-height:19.19px;color:#ffffff;transform:scaleX(0.8800);">KC</div>
<div class="t" style="left:2273.8px;top:777.0px;font-size:26.6px;line-height:26.6px;color:#252423;transform:scaleX(0.9016);">Kate Cloud</div>
<div class="t" style="left:2424.5px;top:777.0px;font-size:26.6px;line-height:26.6px;color:#ff0000;transform:scaleX(0.9435);">01/25/2020</div>
<div class="t" style="left:2603.5px;top:777.6px;font-size:25.87px;line-height:25.87px;color:#73b86b;transform:scaleX(0.9248);">In Progress</div>
<div class="t" style="left:937.5px;top:846.0px;font-size:26.6px;line-height:26.6px;color:#252423;transform:scaleX(0.8908);">000122</div>
<div class="t" style="left:1076.7px;top:846.0px;font-size:26.6px;line-height:26.6px;color:#252423;transform:scaleX(0.8980);">[REVIEW] Content: check on images in User-Guide, images are not clear.</div>
<div class="t" style="left:2224.1px;top:848.7px;font-size:19.19px;line-height:19.19px;color:#ffffff;transform:scaleX(0.8800);">KC</div>
<div class="t" style="left:2273.8px;top:846.0px;font-size:26.6px;line-height:26.6px;color:#252423;transform:scaleX(0.9016);">Kate Cloud</div>
<div class="t" style="left:2424.5px;top:846.0px;font-size:26.6px;line-height:26.6px;color:#ff0000;transform:scaleX(0.9435);">03/20/2020</div>
<div class="t" style="left:2603.5px;top:846.6px;font-size:25.87px;line-height:25.87px;color:#73b86b;transform:scaleX(0.9248);">In Progress</div>
<div class="t" style="left:937.5px;top:915.0px;font-size:26.6px;line-height:26.6px;color:#252423;transform:scaleX(0.8908);">000121</div>
<div class="t" style="left:1076.7px;top:915.0px;font-size:26.6px;line-height:26.6px;color:#252423;transform:scaleX(0.9104);">[REVIEW] Content: update prices per download and type of users in Terms Agreenment</div>
<div class="t" style="left:2224.1px;top:917.7px;font-size:19.19px;line-height:19.19px;color:#ffffff;transform:scaleX(0.8800);">KC</div>
<div class="t" style="left:2273.8px;top:915.0px;font-size:26.6px;line-height:26.6px;color:#252423;transform:scaleX(0.9016);">Kate Cloud</div>
<div class="t" style="left:2424.5px;top:915.0px;font-size:26.6px;line-height:26.6px;color:#ff0000;transform:scaleX(0.9435);">03/07/2020</div>
<div class="t" style="left:2603.5px;top:915.6px;font-size:25.87px;line-height:25.87px;color:#73b86b;transform:scaleX(0.9248);">In Progress</div>
<div class="t" style="left:937.5px;top:984.0px;font-size:26.6px;line-height:26.6px;color:#252423;transform:scaleX(0.8908);">000120</div>
<div class="t" style="left:1077.6px;top:984.0px;font-size:26.6px;line-height:26.6px;color:#252423;transform:scaleX(0.9118);">Content: Main Page content (Check update)</div>
<div class="t" style="left:2224.1px;top:986.7px;font-size:19.19px;line-height:19.19px;color:#ffffff;transform:scaleX(0.8800);">KC</div>
<div class="t" style="left:2273.8px;top:984.0px;font-size:26.6px;line-height:26.6px;color:#252423;transform:scaleX(0.9016);">Kate Cloud</div>
<div class="t" style="left:2424.5px;top:984.0px;font-size:26.6px;line-height:26.6px;color:#252423;transform:scaleX(0.9435);">01/27/2020</div>
<div class="t" style="left:2604.3px;top:984.6px;font-size:25.87px;line-height:25.87px;color:#464775;transform:scaleX(0.9650);">Completed</div>
<div class="t" style="left:937.5px;top:1053.0px;font-size:26.6px;line-height:26.6px;color:#252423;transform:scaleX(0.9118);">000119</div>
<div class="t" style="left:1077.6px;top:1053.0px;font-size:26.6px;line-height:26.6px;color:#252423;transform:scaleX(0.9011);">Content: Terms and Privacy agreement</div>
<div class="t" style="left:2224.1px;top:1055.7px;font-size:19.19px;line-height:19.19px;color:#ffffff;transform:scaleX(0.8800);">KC</div>
<div class="t" style="left:2273.8px;top:1053.0px;font-size:26.6px;line-height:26.6px;color:#252423;transform:scaleX(0.9016);">Kate Cloud</div>
<div class="t" style="left:2424.5px;top:1053.0px;font-size:26.6px;line-height:26.6px;color:#ff0000;transform:scaleX(0.9435);">02/15/2020</div>
<div class="t" style="left:2603.5px;top:1053.6px;font-size:25.87px;line-height:25.87px;color:#73b86b;transform:scaleX(0.9248);">In Progress</div>
<div class="t" style="left:937.5px;top:1122.0px;font-size:26.6px;line-height:26.6px;color:#252423;transform:scaleX(0.9118);">000118</div>
<div class="t" style="left:1077.6px;top:1122.0px;font-size:26.6px;line-height:26.6px;color:#252423;transform:scaleX(0.9238);">Content: Copyrights Agreement</div>
<div class="t" style="left:2224.1px;top:1124.7px;font-size:19.19px;line-height:19.19px;color:#ffffff;transform:scaleX(0.8800);">KC</div>
<div class="t" style="left:2273.8px;top:1122.0px;font-size:26.6px;line-height:26.6px;color:#252423;transform:scaleX(0.9016);">Kate Cloud</div>
<div class="t" style="left:2424.5px;top:1122.0px;font-size:26.6px;line-height:26.6px;color:#252423;transform:scaleX(0.9435);">02/28/2020</div>
<div class="t" style="left:2604.3px;top:1122.6px;font-size:25.87px;line-height:25.87px;color:#464775;transform:scaleX(0.9650);">Completed</div>
<div class="t" style="left:937.5px;top:1191.0px;font-size:26.6px;line-height:26.6px;color:#252423;transform:scaleX(0.9118);">000117</div>
<div class="t" style="left:1077.6px;top:1191.0px;font-size:26.6px;line-height:26.6px;color:#252423;transform:scaleX(0.9340);">Content: Write advertisement content for our website/phone app.</div>
<div class="t" style="left:2224.1px;top:1193.7px;font-size:19.19px;line-height:19.19px;color:#ffffff;transform:scaleX(0.8800);">KC</div>
<div class="t" style="left:2273.8px;top:1191.0px;font-size:26.6px;line-height:26.6px;color:#252423;transform:scaleX(0.9016);">Kate Cloud</div>
<div class="t" style="left:2424.5px;top:1191.0px;font-size:26.6px;line-height:26.6px;color:#ff0000;transform:scaleX(0.9435);">03/15/2020</div>
<div class="t" style="left:2603.5px;top:1191.6px;font-size:25.87px;line-height:25.87px;color:#73b86b;transform:scaleX(0.9248);">In Progress</div>
<div class="t" style="left:937.5px;top:1260.0px;font-size:26.6px;line-height:26.6px;color:#252423;transform:scaleX(0.8908);">000096</div>
<div class="t" style="left:1077.6px;top:1260.0px;font-size:26.6px;line-height:26.6px;color:#252423;transform:scaleX(0.9050);">screenshots for User-Guide</div>
<div class="t" style="left:2274.7px;top:1260.0px;font-size:26.6px;line-height:26.6px;color:#252423;transform:scaleX(0.8692);">z Steven ...</div>
<div class="t" style="left:2424.5px;top:1260.0px;font-size:26.6px;line-height:26.6px;color:#252423;transform:scaleX(0.9435);">02/20/2020</div>
<div class="t" style="left:2604.3px;top:1260.6px;font-size:25.87px;line-height:25.87px;color:#464775;transform:scaleX(0.9650);">Completed</div>
<div class="t" style="left:937.5px;top:1329.0px;font-size:26.6px;line-height:26.6px;color:#252423;transform:scaleX(0.8908);">000091</div>
<div class="t" style="left:1076.7px;top:1329.0px;font-size:26.6px;line-height:26.6px;color:#252423;transform:scaleX(0.9175);">Mobile: User login, create account</div>
<div class="t" style="left:2274.7px;top:1329.0px;font-size:26.6px;line-height:26.6px;color:#252423;transform:scaleX(0.8692);">z Steven ...</div>
<div class="t" style="left:2423.5px;top:1329.0px;font-size:26.6px;line-height:26.6px;color:#ff0000;transform:scaleX(0.9508);">12/10/2019</div>
<div class="t" style="left:2603.5px;top:1329.6px;font-size:25.87px;line-height:25.87px;color:#73b86b;transform:scaleX(0.9248);">In Progress</div>
<div class="t" style="left:937.5px;top:1398.0px;font-size:26.6px;line-height:26.6px;color:#252423;transform:scaleX(0.8908);">000090</div>
<div class="t" style="left:1076.6px;top:1398.0px;font-size:26.6px;line-height:26.6px;color:#252423;transform:scaleX(0.9251);">Mobile: add streaming potocol to ExoVideoPlayer</div>
<div class="t" style="left:2274.7px;top:1398.0px;font-size:26.6px;line-height:26.6px;color:#252423;transform:scaleX(0.8692);">z Steven ...</div>
<div class="t" style="left:2423.5px;top:1398.0px;font-size:26.6px;line-height:26.6px;color:#252423;transform:scaleX(0.9508);">12/31/2019</div>
<div class="t" style="left:2604.3px;top:1398.6px;font-size:25.87px;line-height:25.87px;color:#464775;transform:scaleX(0.9650);">Completed</div>
<div class="t" style="left:937.5px;top:1467.0px;font-size:26.6px;line-height:26.6px;color:#252423;transform:scaleX(0.8908);">000089</div>
<div class="t" style="left:1076.7px;top:1467.0px;font-size:26.6px;line-height:26.6px;color:#252423;transform:scaleX(0.9159);">Mobile: Create shopping cart and Payment</div>
<div class="t" style="left:2274.7px;top:1467.0px;font-size:26.6px;line-height:26.6px;color:#252423;transform:scaleX(0.8692);">z Steven ...</div>
<div class="t" style="left:2424.5px;top:1467.0px;font-size:26.6px;line-height:26.6px;color:#ff0000;transform:scaleX(0.9435);">01/15/2020</div>
<div class="t" style="left:2603.5px;top:1467.6px;font-size:25.87px;line-height:25.87px;color:#73b86b;transform:scaleX(0.9248);">In Progress</div>
<div class="t" style="left:937.5px;top:1536.0px;font-size:26.6px;line-height:26.6px;color:#252423;transform:scaleX(0.8908);">000087</div>
<div class="t" style="left:1076.7px;top:1536.0px;font-size:26.6px;line-height:26.6px;color:#252423;transform:scaleX(0.9102);">Mobile: create Credit card tab and API receivers.</div>
<div class="t" style="left:2274.7px;top:1536.0px;font-size:26.6px;line-height:26.6px;color:#252423;transform:scaleX(0.8692);">z Steven ...</div>
<div class="t" style="left:2424.5px;top:1536.0px;font-size:26.6px;line-height:26.6px;color:#252423;transform:scaleX(0.9435);">04/03/2020</div>
<div class="t" style="left:2604.3px;top:1536.6px;font-size:25.87px;line-height:25.87px;color:#464775;transform:scaleX(0.9650);">Completed</div>
<div class="t" style="left:937.5px;top:1605.0px;font-size:26.6px;line-height:26.6px;color:#252423;transform:scaleX(0.8908);">000085</div>
<div class="t" style="left:1077.6px;top:1605.0px;font-size:26.6px;line-height:26.6px;color:#252423;transform:scaleX(0.9061);">Content: Prepare real data for screenshots of User-Guide</div>
<div class="t" style="left:2274.7px;top:1605.0px;font-size:26.6px;line-height:26.6px;color:#252423;transform:scaleX(0.8638);">z Kate Cl...</div>
<div class="t" style="left:2424.5px;top:1605.0px;font-size:26.6px;line-height:26.6px;color:#252423;transform:scaleX(0.9435);">03/28/2020</div>
<div class="t" style="left:2604.3px;top:1605.6px;font-size:25.87px;line-height:25.87px;color:#464775;transform:scaleX(0.9650);">Completed</div>
<div class="t" style="left:937.5px;top:1674.0px;font-size:26.6px;line-height:26.6px;color:#252423;transform:scaleX(0.8908);">000084</div>
<div class="t" style="left:1077.6px;top:1674.0px;font-size:26.6px;line-height:26.6px;color:#252423;transform:scaleX(0.9149);">Content: Capture and edit images for User-Guide</div>
<div class="t" style="left:2274.7px;top:1674.0px;font-size:26.6px;line-height:26.6px;color:#252423;transform:scaleX(0.8638);">z Kate Cl...</div>
<div class="t" style="left:2424.5px;top:1674.0px;font-size:26.6px;line-height:26.6px;color:#ff0000;transform:scaleX(0.9435);">04/06/2020</div>
<div class="t" style="left:2603.5px;top:1674.6px;font-size:25.87px;line-height:25.87px;color:#73b86b;transform:scaleX(0.9248);">In Progress</div>
<div class="t" style="left:937.5px;top:1743.0px;font-size:26.6px;line-height:26.6px;color:#252423;transform:scaleX(0.8908);">000083</div>
<div class="t" style="left:1076.6px;top:1743.0px;font-size:26.6px;line-height:26.6px;color:#252423;transform:scaleX(0.9342);">Play with the app and report bugs to team</div>
<div class="t" style="left:2274.7px;top:1743.0px;font-size:26.6px;line-height:26.6px;color:#252423;transform:scaleX(0.8692);">z Steven ...</div>
<div class="t" style="left:2423.5px;top:1743.0px;font-size:26.6px;line-height:26.6px;color:#252423;transform:scaleX(0.9508);">12/30/2019</div>
<div class="t" style="left:2604.3px;top:1743.6px;font-size:25.87px;line-height:25.87px;color:#464775;transform:scaleX(0.9650);">Completed</div>
<div class="t" style="left:937.5px;top:1812.0px;font-size:26.6px;line-height:26.6px;color:#252423;transform:scaleX(0.8908);">000081</div>
<div class="t" style="left:1076.7px;top:1812.0px;font-size:26.6px;line-height:26.6px;color:#252423;transform:scaleX(0.9153);">Mobile: Connect BE with AI chatbox</div>
<div class="t" style="left:2274.7px;top:1812.0px;font-size:26.6px;line-height:26.6px;color:#252423;transform:scaleX(0.8692);">z Steven ...</div>
<div class="t" style="left:2424.5px;top:1812.0px;font-size:26.6px;line-height:26.6px;color:#ff0000;transform:scaleX(0.9435);">02/28/2020</div>
<div class="t" style="left:2603.5px;top:1812.6px;font-size:25.87px;line-height:25.87px;color:#73b86b;transform:scaleX(0.9248);">In Progress</div>
<div class="b" style="left:749px;top:1833px;width:2249px;height:2px;background:#e0e0e0;"></div>
<div class="b" style="left:749px;top:1835px;width:2249px;height:81px;background:#f3f2f1;"></div>
<div class="b" style="left:2779px;top:1850px;width:37.5px;height:38px;background:#7f7fb5;border-radius:3px;"></div>
<svg width="2998" height="1916" viewBox="0 0 2998 1916"><rect x="2693" y="1862" width="2.5" height="14" fill="#777"/><path d="M2705.8 1862 V1876 L2695.5 1869 Z" fill="#777"/>
<path d="M2755 1862 V1876 L2744.2 1869 Z" fill="#777"/>
<path d="M2891 1862 V1876 L2901.5 1869 Z" fill="#000"/>
<path d="M2938 1862 V1876 L2948 1869 Z" fill="#000"/><rect x="2948.6" y="1862" width="2.5" height="14" fill="#000"/></svg>
<div class="t" style="left:780.6px;top:1857.7px;font-size:25.58px;line-height:25.58px;color:#323130;transform:scaleX(0.9662);">1 - 21 of 33 items</div>
<div class="t" style="left:2791.7px;top:1858.0px;font-size:26.16px;line-height:26.16px;color:#ffffff;">1</div>
<div class="t" style="left:2840.4px;top:1858.0px;font-size:26.16px;line-height:26.16px;color:#464775;">2</div>
<div class="b" style="left:1281px;top:208px;width:350px;height:552px;background:#fff;border-radius:8px;box-shadow:0 6px 16px rgba(0,0,0,0.16),0 1px 4px rgba(0,0,0,0.08);"></div>
<div class="b" style="left:1281px;top:506.2px;width:350px;height:2.6px;background:#f0f0f0;"></div>
<div class="b" style="left:1281px;top:685px;width:350px;height:2.6px;background:#f0f0f0;"></div>
<div class="b" style="left:1281px;top:690.5px;width:350px;height:57px;background:#f0f0f0;"></div>
<svg width="2998" height="1916" viewBox="0 0 2998 1916" style="pointer-events:none"><rect x="1315.4" y="234.4" width="19.2" height="19.3" rx="3.5" stroke="#616161" stroke-width="1.9" fill="none" stroke-linecap="round" stroke-linejoin="round"/><path d="M1311.3 238.5 V252.5 C1311.3 255.5 1313.5 257.9 1316.5 257.9 H1327 C1329.5 257.9 1331 256.5 1331.3 254" stroke="#616161" stroke-width="1.9" fill="none" stroke-linecap="round" stroke-linejoin="round"/><path d="M1319.8 248.9 L1329.4 239.4 M1321.3 239.4 H1329.4 V247.2" stroke="#616161" stroke-width="1.9" fill="none" stroke-linecap="round" stroke-linejoin="round"/>
<path d="M1311.5 313.2 L1334.3 290.3 M1323.4 290.3 H1334.3 V301.5 M1311.5 302.2 V313.2 H1322.7" stroke="#616161" stroke-width="1.9" fill="none" stroke-linecap="round" stroke-linejoin="round"/>
<path d="M1336.3 357.5 A13.4 13.4 0 1 1 1333.5 349.5" stroke="#616161" stroke-width="1.9" fill="none" stroke-linecap="round" stroke-linejoin="round"/><path d="M1334.6 344.3 V352.1 H1327.2" stroke="#616161" stroke-width="1.9" fill="none" stroke-linecap="round" stroke-linejoin="round"/>
<circle cx="1323.1" cy="414" r="13.4" stroke="#616161" stroke-width="1.9" fill="none" stroke-linecap="round" stroke-linejoin="round"/><ellipse cx="1323.1" cy="414" rx="5.8" ry="13.4" stroke="#616161" stroke-width="1.9" fill="none" stroke-linecap="round" stroke-linejoin="round"/><path d="M1310.5 408.5 H1335.7 M1310.5 419.4 H1335.7" stroke="#616161" stroke-width="1.9" fill="none" stroke-linecap="round" stroke-linejoin="round"/>
<path d="M1319.5 467.2 H1316 A6.6 6.6 0 0 0 1316 480.4 H1319.5 M1326.5 467.2 H1330 A6.6 6.6 0 0 1 1330 480.4 H1326.5 M1315.8 473.8 H1330.5" stroke="#616161" stroke-width="1.9" fill="none" stroke-linecap="round" stroke-linejoin="round"/>
<path d="M1319.8 530.7 H1313 C1311 530.7 1309.6 532.2 1309.6 534 V547.6 C1309.6 549.5 1311 550.9 1313 550.9 H1319.8 M1326.4 530.7 H1333.2 C1335.2 530.7 1336.6 532.2 1336.6 534 V547.6 C1336.6 549.5 1335.2 550.9 1333.2 550.9 H1326.4 M1323.1 527.8 V553.8 M1320.3 527.8 H1325.9 M1320.3 553.8 H1325.9" stroke="#616161" stroke-width="1.9" fill="none" stroke-linecap="round" stroke-linejoin="round"/>
<path d="M1332.66 593.23 L1336.55 593.69 L1336.55 599.91 L1332.66 600.37 L1330.97 603.29 L1332.52 606.89 L1327.13 610.00 L1324.79 606.86 L1321.41 606.86 L1319.07 610.00 L1313.68 606.89 L1315.23 603.29 L1313.54 600.37 L1309.65 599.91 L1309.65 593.69 L1313.54 593.23 L1315.23 590.31 L1313.68 586.71 L1319.07 583.60 L1321.41 586.74 L1324.79 586.74 L1327.13 583.60 L1332.52 586.71 L1330.97 590.31 Z" stroke="#616161" stroke-width="1.9" fill="none" stroke-linecap="round" stroke-linejoin="round"/><circle cx="1323.1" cy="596.8" r="3.7" stroke="#616161" stroke-width="1.9" fill="none" stroke-linecap="round" stroke-linejoin="round"/>
<circle cx="1323.1" cy="653" r="13.4" stroke="#616161" stroke-width="1.9" fill="none" stroke-linecap="round" stroke-linejoin="round"/><path d="M1323.1 651.4 V659.7" stroke="#616161" stroke-width="1.9" fill="none" stroke-linecap="round" stroke-linejoin="round"/><circle cx="1323.1" cy="646.7" r="1.3" fill="#616161"/>
<path d="M1310 709.1 H1336 M1319.4 709 A3.7 3.7 0 0 1 1326.8 709 M1312.3 709.1 L1314.8 729.5 C1315 731 1316 732 1317.5 732 H1328.8 C1330.3 732 1331.3 731 1331.5 729.5 L1334 709.1 M1320.3 715.3 V726.2 M1325.8 715.3 V726.2" stroke="#616161" stroke-width="1.9" fill="none" stroke-linecap="round" stroke-linejoin="round"/></svg>
<div class="t" style="left:1359.5px;top:239.0px;font-size:25.29px;line-height:25.29px;color:#424242;transform:scaleX(0.9881);">Pop out tab</div>
<div class="t" style="left:1359.6px;top:294.9px;font-size:25.29px;line-height:25.29px;color:#424242;transform:scaleX(0.9472);">Expand tab</div>
<div class="t" style="left:1359.6px;top:350.8px;font-size:25.29px;line-height:25.29px;color:#424242;transform:scaleX(0.9521);">Reload tab</div>
<div class="t" style="left:1360.5px;top:406.6px;font-size:25.29px;line-height:25.29px;color:#424242;transform:scaleX(0.9673);">Go to website</div>
<div class="t" style="left:1360.5px;top:462.6px;font-size:25.29px;line-height:25.29px;color:#424242;transform:scaleX(0.9907);">Copy link to tab</div>
<div class="t" style="left:1359.7px;top:528.6px;font-size:25.29px;line-height:25.29px;color:#424242;transform:scaleX(0.9215);">Rename</div>
<div class="t" style="left:1360.5px;top:584.6px;font-size:25.29px;line-height:25.29px;color:#424242;transform:scaleX(0.9522);">Settings</div>
<div class="t" style="left:1361.5px;top:640.4px;font-size:25.29px;line-height:25.29px;color:#424242;transform:scaleX(0.9890);">About this tab</div>
<div class="t" style="left:1359.6px;top:707.6px;font-size:25.29px;line-height:25.29px;color:#424242;transform:scaleX(0.9418);">Remove</div>
<svg width="2998" height="1916" viewBox="0 0 2998 1916"><path d="M1493.5 757 L1489.5 751 C1488.5 749.5 1489 748 1490.2 747.6 C1491.3 747.2 1492.3 747.8 1493 748.8 L1495.3 751.8 V738.5 C1495.3 737 1496.3 736 1497.5 736 C1498.8 736 1499.8 737 1499.8 738.5 V746.5 C1500 745.3 1501 744.8 1502 744.8 C1503.2 744.8 1504 745.6 1504.2 746.8 V748 C1504.5 747 1505.3 746.5 1506.3 746.5 C1507.4 746.5 1508.2 747.3 1508.4 748.5 V749.5 C1508.8 748.7 1509.6 748.3 1510.4 748.3 C1511.6 748.3 1512.5 749.2 1512.5 750.5 V758.5 C1512.5 763.5 1509 767.5 1503.8 767.5 H1500.5 C1497.5 767.5 1495.5 766 1493.5 763 Z" fill="#fff" stroke="#111" stroke-width="1.3" stroke-linejoin="round"/><path d="M1500 755.5 V760.5 M1504.2 755.5 V760.5 M1508.4 755.5 V760.5" stroke="#111" stroke-width="1"/></svg>
</body></html>
